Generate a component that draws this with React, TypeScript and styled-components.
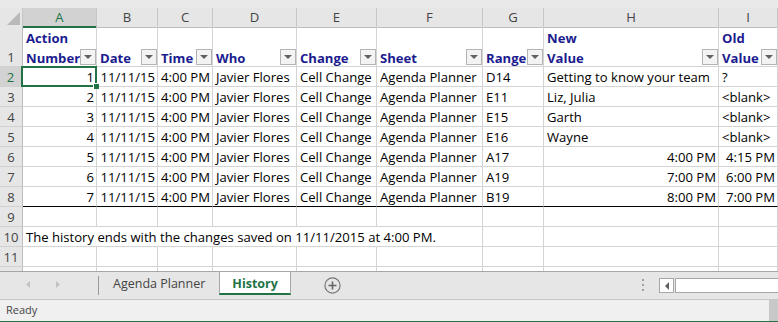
import styled, { createGlobalStyle, css } from "styled-components";

const COLS = "23px 74px 61px 55px 84px 80px 106px 61px 175px 59px";
const GREEN = "#217346";
const GRID = "#d4d4d4";
const HEAD_BG = "#e6e6e6";

const GlobalStyle = createGlobalStyle`
  html, body { margin: 0; padding: 0; background: #fff; }
  body { font-family: "Open Sans", "Noto Sans", sans-serif; }
  * { box-sizing: border-box; }
`;

const Window = styled.div`
  width: 778px;
  height: 322px;
  display: flex;
  flex-direction: column;
  overflow: hidden;
`;

const Sheet = styled.div`
  flex: 1;
  overflow: hidden;
  display: flex;
  flex-direction: column;
`;

const TopStrip = styled.div`
  height: 8px;
  flex: none;
  background: #e9e9e9;
`;

const Row = styled.div<{ $height: number }>`
  display: grid;
  grid-template-columns: ${COLS};
  height: ${(p) => p.$height}px;
  flex: none;
  font-size: 13.1px;
`;

const Corner = styled.div`
  background: ${HEAD_BG};
  border-right: 1px solid #c6c6c6;
  border-bottom: 1px solid #bdbdbd;
  display: flex;
  align-items: flex-end;
  justify-content: flex-end;
  padding: 0 2px 2px 0;
`;

const ColLetter = styled.div<{ $active?: boolean }>`
  background: ${(p) => (p.$active ? "#d2d2d2" : HEAD_BG)};
  border-right: 1px solid #c6c6c6;
  border-bottom: ${(p) => (p.$active ? `2px solid ${GREEN}` : "1px solid #bdbdbd")};
  color: ${(p) => (p.$active ? GREEN : "#444")};
  text-align: center;
  line-height: 18px;
`;

const RowNum = styled.div<{ $active?: boolean }>`
  background: ${(p) => (p.$active ? "#d2d2d2" : HEAD_BG)};
  border-right: ${(p) => (p.$active ? `2px solid ${GREEN}` : "1px solid #bdbdbd")};
  border-bottom: 1px solid #d0d0d0;
  color: ${(p) => (p.$active ? GREEN : "#444")};
  display: flex;
  align-items: flex-end;
  justify-content: center;
  line-height: 17.5px;
`;

const Cell = styled.div<{ $align?: "left" | "right"; $edge?: boolean; $span?: number }>`
  position: relative;
  display: flex;
  align-items: flex-end;
  justify-content: ${(p) => (p.$align === "right" ? "flex-end" : "flex-start")};
  padding: 0 2px 0 3px;
  border-right: 1px solid ${GRID};
  border-bottom: 1px solid ${(p) => (p.$edge ? "#000" : GRID)};
  white-space: nowrap;
  line-height: 17.5px;
  color: #000;
  ${(p) =>
    p.$span &&
    css`
      grid-column: span ${p.$span};
    `}
`;

const HeadCell = styled(Cell)`
  padding-right: 0;
  font-weight: 700;
  color: #1c1c8f;
  justify-content: space-between;
`;

const HeadLabel = styled.span`
  line-height: 20px;
  margin-bottom: -2px;
  white-space: nowrap;
`;

const FilterButton = styled.span`
  flex: none;
  width: 16px;
  height: 16px;
  margin-bottom: 1px;
  border: 1px solid #b4b4b4;
  background: #f3f3f3;
  display: flex;
  align-items: center;
  justify-content: center;

  &::after {
    content: "";
    border-left: 4px solid transparent;
    border-right: 4px solid transparent;
    border-top: 4px solid #616161;
  }
`;

const ActiveBox = styled.div`
  position: absolute;
  left: -2px;
  top: -1px;
  right: -1px;
  bottom: -1px;
  border: 2px solid ${GREEN};
  z-index: 3;
  pointer-events: none;
`;

const FillHandle = styled.div`
  position: absolute;
  right: -4px;
  bottom: -4px;
  width: 6px;
  height: 6px;
  background: ${GREEN};
  border-left: 1px solid #fff;
  border-top: 1px solid #fff;
`;

const TabBar = styled.div`
  height: 28px;
  flex: none;
  display: flex;
  background: ${HEAD_BG};
  border-top: 1px solid #a6a6a6;
`;

const NavArea = styled.div`
  width: 98px;
  display: flex;
  align-items: center;
  gap: 26px;
  padding: 0 0 3px 26px;
`;

const Divider = styled.div`
  width: 1px;
  height: 19px;
  margin-top: 4px;
  background: #9a9a9a;
`;

const SheetTab = styled.div<{ $active?: boolean }>`
  height: 23px;
  padding: 2px ${(p) => (p.$active ? 12 : 14)}px 0;
  line-height: 20px;
  font-size: 12.5px;
  color: #444;
  ${(p) =>
    p.$active &&
    css`
      background: #fff;
      color: ${GREEN};
      font-weight: 700;
      border-left: 1px solid #a6a6a6;
      border-right: 1px solid #a6a6a6;
      border-bottom: 2px solid ${GREEN};
    `}
`;

const AddSheet = styled.div`
  margin: 5px 0 0 33px;
  width: 17px;
  height: 17px;
`;

const Spacer = styled.div`
  flex: 1;
`;

const Grip = styled.div`
  width: 2px;
  margin: 7px 15px 0 0;
  display: flex;
  flex-direction: column;
  gap: 3px;

  span {
    width: 2px;
    height: 2px;
    background: #a0a0a0;
  }
`;

const HScroll = styled.div`
  width: 119px;
  height: 15px;
  margin-top: 6px;
  display: flex;
  gap: 1px;
`;

const ScrollButton = styled.div`
  width: 15px;
  border: 1px solid #a6a6a6;
  background: #fff;
  display: flex;
  align-items: center;
  justify-content: center;

  &::after {
    content: "";
    border-top: 4px solid transparent;
    border-bottom: 4px solid transparent;
    border-right: 4px solid #606060;
  }
`;

const ScrollTrack = styled.div`
  flex: 1;
  border: 1px solid #a6a6a6;
  border-right: none;
  background: #fff;
`;

const StatusBar = styled.div`
  height: 23px;
  flex: none;
  display: flex;
  background: #f0f0f0;
  border-top: 1px solid #c6c6c6;
  border-bottom: 1px solid ${GREEN};
  font-size: 11px;
  color: #444;
`;

const StatusText = styled.div`
  flex: 1;
  padding: 0 0 0 6px;
  line-height: 20px;
`;

const StatusBlock = styled.div`
  width: 9px;
  background: #c8c8c8;
`;

const letters = ["A", "B", "C", "D", "E", "F", "G", "H", "I"];

const titles: string[][] = [
  ["Action", "Number"],
  ["Date"],
  ["Time"],
  ["Who"],
  ["Change"],
  ["Sheet"],
  ["Range"],
  ["New", "Value"],
  ["Old", "Value"],
];

const history: string[][] = [
  ["1", "11/11/15", "4:00 PM", "Javier Flores", "Cell Change", "Agenda Planner", "D14", "Getting to know your team", "?"],
  ["2", "11/11/15", "4:00 PM", "Javier Flores", "Cell Change", "Agenda Planner", "E11", "Liz, Julia", "<blank>"],
  ["3", "11/11/15", "4:00 PM", "Javier Flores", "Cell Change", "Agenda Planner", "E15", "Garth", "<blank>"],
  ["4", "11/11/15", "4:00 PM", "Javier Flores", "Cell Change", "Agenda Planner", "E16", "Wayne", "<blank>"],
  ["5", "11/11/15", "4:00 PM", "Javier Flores", "Cell Change", "Agenda Planner", "A17", "4:00 PM", "4:15 PM"],
  ["6", "11/11/15", "4:00 PM", "Javier Flores", "Cell Change", "Agenda Planner", "A19", "7:00 PM", "6:00 PM"],
  ["7", "11/11/15", "4:00 PM", "Javier Flores", "Cell Change", "Agenda Planner", "B19", "8:00 PM", "7:00 PM"],
];

const alignOf = (v: string) => (/^\d/.test(v) ? "right" : "left");

function Arrow({ dir }: { dir: "left" | "right" }) {
  return (
    <svg width="4" height="7" viewBox="0 0 4 7">
      <path d={dir === "left" ? "M4 0 L0 3.5 L4 7 Z" : "M0 0 L4 3.5 L0 7 Z"} fill="#c3c3c3" />
    </svg>
  );
}

// n is omitted for the last, clipped row: only its top few pixels show
function EmptyRow({ n }: { n?: number }) {
  return (
    <Row $height={20}>
      <RowNum>{n}</RowNum>
      {letters.map((l) => (
        <Cell key={l} />
      ))}
    </Row>
  );
}

export default function App() {
  return (
    <>
      <GlobalStyle />
      <Window>
        <Sheet>
          <TopStrip />
          <Row $height={19}>
            <Corner>
              <svg width="13" height="13" viewBox="0 0 13 13">
                <path d="M13 0 L13 13 L0 13 Z" fill="#b9b9b9" />
              </svg>
            </Corner>
            {letters.map((l) => (
              <ColLetter key={l} $active={l === "A"}>
                {l}
              </ColLetter>
            ))}
          </Row>

          <Row $height={40}>
            <RowNum>1</RowNum>
            {titles.map((t) => (
              <HeadCell key={t.join(" ")}>
                <HeadLabel>
                  {t.map((line, i) => (
                    <span key={line}>
                      {i > 0 && <br />}
                      {line}
                    </span>
                  ))}
                </HeadLabel>
                <FilterButton />
              </HeadCell>
            ))}
          </Row>

          {history.map((r, ri) => (
            <Row $height={20} key={r[0]}>
              <RowNum $active={ri === 0}>{ri + 2}</RowNum>
              {r.map((v, ci) => (
                <Cell key={ci} $align={alignOf(v)} $edge={ri === history.length - 1}>
                  {v}
                  {ri === 0 && ci === 0 && (
                    <ActiveBox>
                      <FillHandle />
                    </ActiveBox>
                  )}
                </Cell>
              ))}
            </Row>
          ))}

          <EmptyRow n={9} />
          <Row $height={20}>
            <RowNum>10</RowNum>
            <Cell $span={6}>The history ends with the changes saved on 11/11/2015 at 4:00 PM.</Cell>
            <Cell />
            <Cell />
            <Cell />
          </Row>
          <EmptyRow n={11} />
          <EmptyRow />
        </Sheet>

        <TabBar>
          <NavArea>
            <Arrow dir="left" />
            <Arrow dir="right" />
          </NavArea>
          <Divider />
          <SheetTab>Agenda Planner</SheetTab>
          <SheetTab $active>History</SheetTab>
          <AddSheet>
            <svg width="17" height="17" viewBox="0 0 17 17">
              <circle cx="8.5" cy="8.5" r="7.6" fill="none" stroke="#777" strokeWidth="1.2" />
              <path d="M8.5 4.5 V12.5 M4.5 8.5 H12.5" stroke="#666" strokeWidth="1.6" />
            </svg>
          </AddSheet>
          <Spacer />
          <Grip>
            <span />
            <span />
            <span />
          </Grip>
          <HScroll>
            <ScrollButton />
            <ScrollTrack />
          </HScroll>
        </TabBar>

        <StatusBar>
          <StatusText>Ready</StatusText>
          <StatusBlock />
        </StatusBar>
      </Window>
    </>
  );
}
